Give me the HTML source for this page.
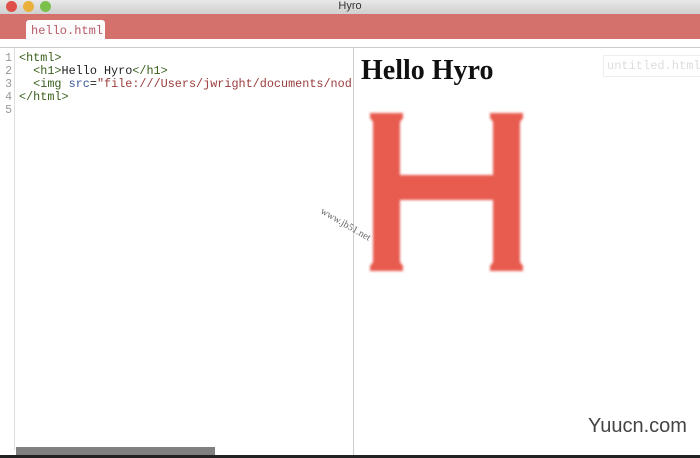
<!DOCTYPE html>
<html><head><meta charset="utf-8"><style>
body{margin:0;width:700px;height:458px;overflow:hidden;background:#fff;position:relative;font-family:"Liberation Sans",sans-serif}
.title{position:absolute;left:0;top:0;width:700px;height:14px;background:linear-gradient(#e8e8e8,#cfcfcf);font-size:11px;text-align:center;line-height:13px;color:#333}
.dot{position:absolute;top:1px;width:11px;height:11px;border-radius:50%}
.tabbar{position:absolute;left:0;top:14px;width:700px;height:25px;background:#d4716c}
.strip{position:absolute;left:0;top:39px;width:700px;height:8px;background:#fff;border-bottom:1px solid #ccc}
.tab{position:absolute;left:26px;top:20px;width:79px;height:20px;background:#fbfbfb;border-radius:3px 3px 0 0;font-family:"Liberation Mono",monospace;font-size:12px;line-height:22px;text-indent:5px;color:#b85a68}
.gutter{position:absolute;left:0;top:48px;width:15px;height:402px;border-right:1px solid #ddd;font-family:"Liberation Mono",monospace;font-size:11.5px;color:#999;line-height:13px;text-align:right;padding-right:2px;box-sizing:border-box;padding-top:4px}
.code{position:absolute;left:19px;top:52px;font-family:"Liberation Mono",monospace;font-size:11.8px;line-height:13px;color:#222;white-space:pre}
.t{color:#3a5f1c}.a{color:#3b57a0}.s{color:#9a3b3b}
.div{position:absolute;left:353px;top:48px;width:1px;height:410px;background:#ccc}
h1{position:absolute;left:361px;top:55px;margin:0;font-family:"Liberation Serif",serif;font-size:28px;font-weight:bold;color:#111}
.unt{position:absolute;left:603px;top:55px;width:100px;height:20px;border:1px solid #eee;font-family:"Liberation Mono",monospace;font-size:12px;color:#ddd;line-height:20px;text-indent:3px}
.scroll{position:absolute;left:16px;top:447px;width:199px;height:8px;background:#808080}
.bot{position:absolute;left:0;top:455px;width:700px;height:3px;background:#222}
.wm{position:absolute;left:588px;top:415px;font-size:20px;color:#444}
.jb{position:absolute;left:324px;top:206px;font-family:"Liberation Serif",serif;font-size:10px;color:#666;transform:rotate(30deg);transform-origin:left top}
</style></head><body>
<div class="title">Hyro</div>
<div class="dot" style="left:6px;background:#e0504a"></div>
<div class="dot" style="left:23px;background:#e9b13b"></div>
<div class="dot" style="left:40px;background:#7cc04c"></div>
<div class="tabbar"></div>
<div class="strip"></div>
<div class="tab">hello.html</div>
<div class="gutter">1<br>2<br>3<br>4<br>5</div>
<div class="code"><span class="t">&lt;html&gt;</span>
  <span class="t">&lt;h1&gt;</span>Hello Hyro<span class="t">&lt;/h1&gt;</span>
  <span class="t">&lt;img</span> <span class="a">src</span>=<span class="s">"file:///Users/jwright/documents/nod</span>
<span class="t">&lt;/html&gt;</span></div>
<div class="div"></div>
<h1>Hello Hyro</h1>
<div class="unt">untitled.html</div>
<svg style="position:absolute;left:0;top:0" width="700" height="458">
<defs><filter id="b"><feGaussianBlur stdDeviation="1.2"/></filter></defs>
<g fill="#e85c4f" filter="url(#b)">
<path d="M370 113H403V118L400 122V262L403 266V271H370V266L373 262V122L370 118Z"/>
<path d="M490 113H523V118L520 122V262L523 266V271H490V266L493 262V122L490 118Z"/>
<rect x="398" y="175" width="97" height="25"/>
</g></svg>
<div class="jb">www.jb51.net</div>
<div class="scroll"></div>
<div class="bot"></div>
<div class="wm">Yuucn.com</div>
</body></html>
